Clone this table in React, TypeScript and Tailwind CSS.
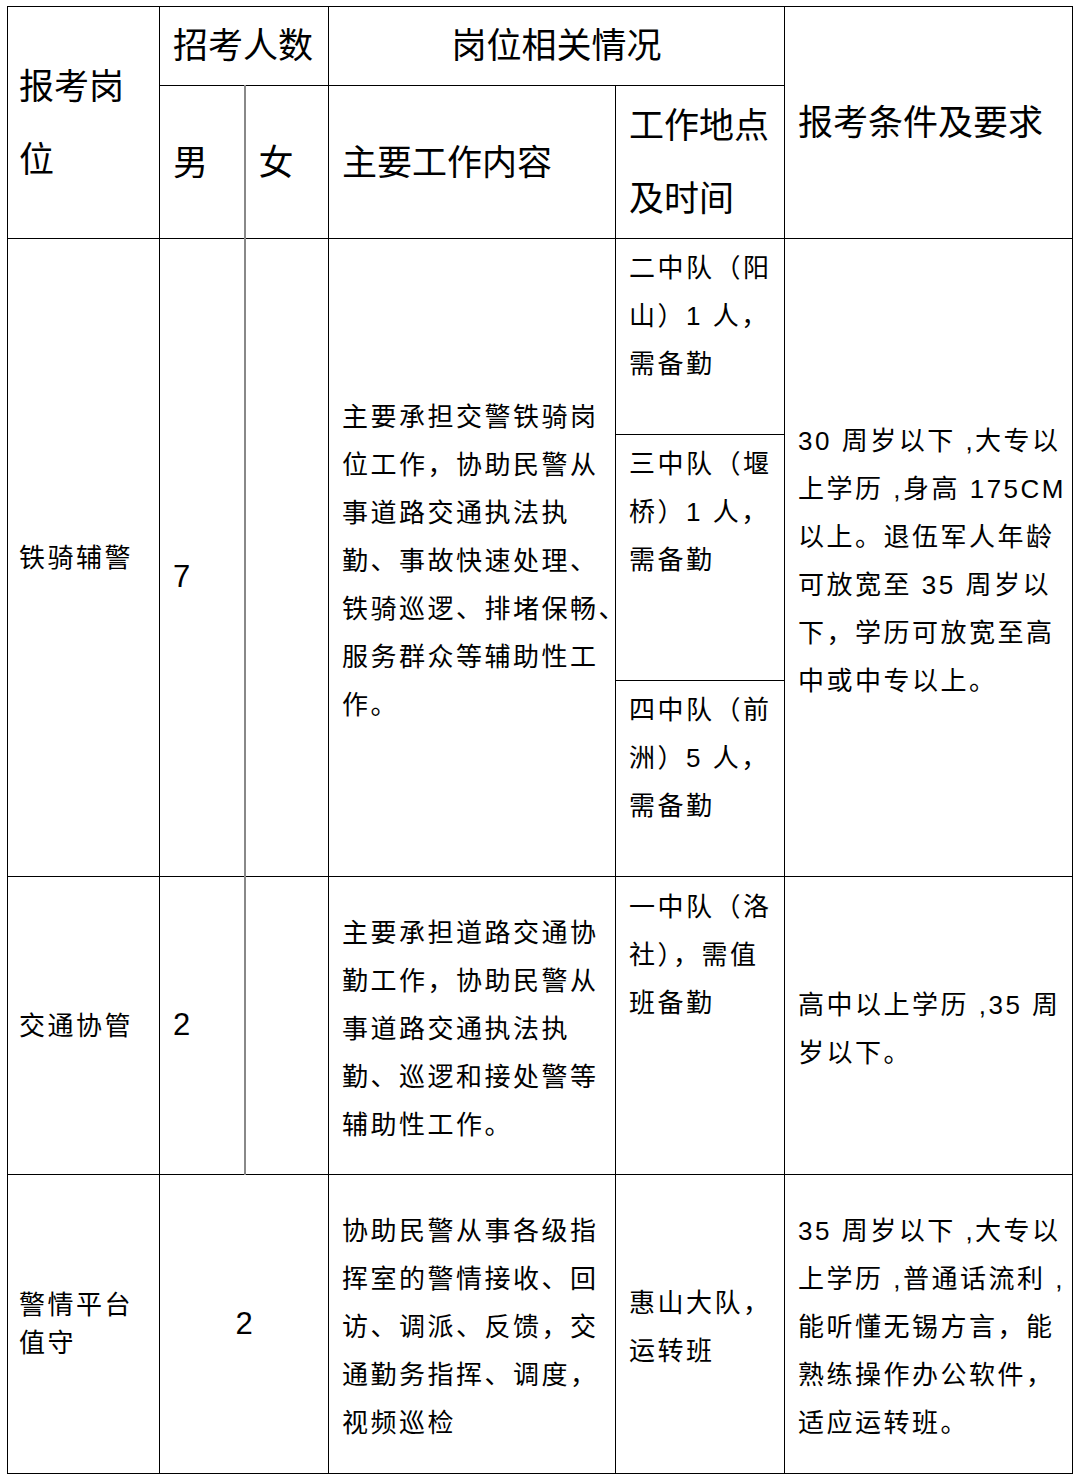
const cell = "border border-black p-0";
const txt = "text-[26px] tracking-[2.5px] whitespace-nowrap";
const body = `${txt} leading-[48px]`;
const headTxt = "text-[35px] tracking-normal whitespace-nowrap";
const head = `${headTxt} leading-[73px]`;

function Lines({ lines }: { lines: string[] }) {
  return (
    <>
      {lines.map((l, i) => (
        <div key={i}>{l}</div>
      ))}
    </>
  );
}

export default function App() {
  return (
    <div className="min-h-[1482px] bg-white pl-[7px] pt-[6px] text-black font-['Liberation_Sans','Noto_Sans_CJK_SC',sans-serif]">
      <table className="table-fixed border-collapse w-[1065px]">
        <colgroup>
          <col className="w-[152px]" />
          <col className="w-[85px]" />
          <col className="w-[84px]" />
          <col className="w-[287px]" />
          <col className="w-[169px]" />
          <col className="w-[288px]" />
        </colgroup>
        <tbody>
          {/* 表头 */}
          <tr className="h-[79px]">
            <td rowSpan={2} className={`${cell} align-middle pl-[11px] ${head}`}>
              <Lines lines={["报考岗", "位"]} />
            </td>
            <td colSpan={2} className={`${cell} align-middle pl-[13px] ${headTxt} leading-[40px]`}>
              招考人数
            </td>
            <td colSpan={2} className={`${cell} align-middle text-center ${headTxt} leading-[40px]`}>
              岗位相关情况
            </td>
            <td rowSpan={2} className={`${cell} align-middle pl-[13px] ${head}`}>
              报考条件及要求
            </td>
          </tr>
          <tr className="h-[153px]">
            <td className={`${cell} border-r-2 border-r-[#888] align-middle pl-[13px] ${head}`}>男</td>
            <td className={`${cell} border-l-2 border-l-[#888] align-middle pl-[13px] ${head}`}>女</td>
            <td className={`${cell} align-middle pl-[13px] ${head}`}>主要工作内容</td>
            <td className={`${cell} align-middle pl-[13px] ${head}`}>
              <Lines lines={["工作地点", "及时间"]} />
            </td>
          </tr>

          {/* 铁骑辅警 */}
          <tr className="h-[196px]">
            <td rowSpan={3} className={`${cell} align-middle pl-[11px] ${body}`}>铁骑辅警</td>
            <td rowSpan={3} className={`${cell} border-r-2 border-r-[#888] align-middle pl-[13px] pt-[40px] text-[31px]`}>7</td>
            <td rowSpan={3} className={`${cell} border-l-2 border-l-[#888]`}></td>
            <td rowSpan={3} className={`${cell} align-middle pl-[13px] pt-[6px] ${body}`}>
              <Lines
                lines={[
                  "主要承担交警铁骑岗",
                  "位工作，协助民警从",
                  "事道路交通执法执",
                  "勤、事故快速处理、",
                  "铁骑巡逻、排堵保畅、",
                  "服务群众等辅助性工",
                  "作。",
                ]}
              />
            </td>
            <td className={`${cell} align-top pl-[13px] pt-[5px] ${body}`}>
              <Lines lines={["二中队（阳", "山）1 人，", "需备勤"]} />
            </td>
            <td rowSpan={3} className={`${cell} align-middle pl-[13px] pt-[6px] ${body}`}>
              <Lines
                lines={[
                  "30 周岁以下 ,大专以",
                  "上学历 ,身高 175CM",
                  "以上。退伍军人年龄",
                  "可放宽至 35 周岁以",
                  "下，学历可放宽至高",
                  "中或中专以上。",
                ]}
              />
            </td>
          </tr>
          <tr className="h-[246px]">
            <td className={`${cell} align-top pl-[13px] pt-[5px] ${body}`}>
              <Lines lines={["三中队（堰", "桥）1 人，", "需备勤"]} />
            </td>
          </tr>
          <tr className="h-[196px]">
            <td className={`${cell} align-top pl-[13px] pt-[5px] ${body}`}>
              <Lines lines={["四中队（前", "洲）5 人，", "需备勤"]} />
            </td>
          </tr>

          {/* 交通协管 */}
          <tr className="h-[298px]">
            <td className={`${cell} align-middle pl-[11px] ${body}`}>交通协管</td>
            <td className={`${cell} border-r-2 border-r-[#888] align-middle pl-[13px] text-[31px]`}>2</td>
            <td className={`${cell} border-l-2 border-l-[#888]`}></td>
            <td className={`${cell} align-middle pl-[13px] pt-[6px] ${body}`}>
              <Lines
                lines={[
                  "主要承担道路交通协",
                  "勤工作，协助民警从",
                  "事道路交通执法执",
                  "勤、巡逻和接处警等",
                  "辅助性工作。",
                ]}
              />
            </td>
            <td className={`${cell} align-top pl-[13px] pt-[6px] ${body}`}>
              <Lines lines={["一中队（洛", "社），需值", "班备勤"]} />
            </td>
            <td className={`${cell} align-middle pl-[13px] pt-[6px] ${body}`}>
              <Lines lines={["高中以上学历 ,35 周", "岁以下。"]} />
            </td>
          </tr>

          {/* 警情平台值守 */}
          <tr className="h-[299px]">
            <td className={`${cell} align-middle pl-[11px] ${txt} leading-[38px]`}>
              <Lines lines={["警情平台", "值守"]} />
            </td>
            <td colSpan={2} className={`${cell} align-middle text-center text-[31px]`}>2</td>
            <td className={`${cell} align-middle pl-[13px] pt-[6px] ${body}`}>
              <Lines
                lines={[
                  "协助民警从事各级指",
                  "挥室的警情接收、回",
                  "访、调派、反馈，交",
                  "通勤务指挥、调度，",
                  "视频巡检",
                ]}
              />
            </td>
            <td className={`${cell} align-middle pl-[13px] pt-[6px] ${body}`}>
              <Lines lines={["惠山大队，", "运转班"]} />
            </td>
            <td className={`${cell} align-middle pl-[13px] pt-[6px] ${body}`}>
              <Lines
                lines={[
                  "35 周岁以下 ,大专以",
                  "上学历 ,普通话流利 ,",
                  "能听懂无锡方言，能",
                  "熟练操作办公软件，",
                  "适应运转班。",
                ]}
              />
            </td>
          </tr>
        </tbody>
      </table>
    </div>
  );
}
